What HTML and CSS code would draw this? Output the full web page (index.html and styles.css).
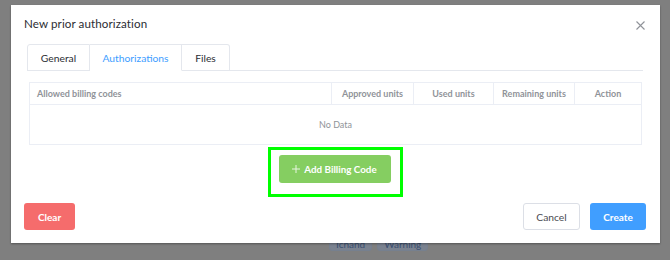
FILE: index.html
```html
<!DOCTYPE html>
<html>
<head>
	<meta charset="utf-8">
	<title>New prior authorization</title>
	<link rel="stylesheet" href="styles.css">
</head>
<body>
	<div class="dialog">
		<div class="dialog-header">
			<span class="dialog-title">New prior authorization</span>
			<button class="dialog-close" aria-label="Close">
				<svg width="9" height="9" viewBox="0 0 9 9"><path d="M0.5 0.5L8.5 8.5M8.5 0.5L0.5 8.5" stroke="#909399" stroke-width="1.1" fill="none"/></svg>
			</button>
		</div>
		<div class="dialog-body">
			<div class="tabs">
				<div class="tab">General</div>
				<div class="tab is-active">Authorizations</div>
				<div class="tab">Files</div>
			</div>
			<div class="table">
				<div class="table-head">
					<div class="cell cell-code">Allowed billing codes</div>
					<div class="cell cell-approved">Approved units</div>
					<div class="cell cell-used">Used units</div>
					<div class="cell cell-remaining">Remaining units</div>
					<div class="cell cell-action">Action</div>
				</div>
				<div class="table-empty">No Data</div>
			</div>
			<div class="add-wrap">
				<div class="highlight">
					<button class="btn btn-success">
						<svg width="8" height="8" viewBox="0 0 8 8"><path d="M4 0V8M0 4H8" stroke="#e8f5e1" stroke-width="1" fill="none"/></svg>
						Add Billing Code
					</button>
				</div>
			</div>
		</div>
		<div class="dialog-footer">
			<button class="btn btn-danger">Clear</button>
			<div class="footer-right">
				<button class="btn btn-default">Cancel</button>
				<button class="btn btn-primary">Create</button>
			</div>
		</div>
	</div>
	<div class="page-tags">
		<span class="page-tag">Ichand</span>
		<span class="page-tag">Warning</span>
	</div>
</body>
</html>
```

FILE: styles.css
```css
* {
	margin: 0;
	padding: 0;
	box-sizing: border-box;
}
body {
	font-family: 'Lato', 'Open Sans', Arial, sans-serif;
	background-color: #7f7f7f;
	padding: 5px 0 0 11px;
	overflow: hidden;
}
button {
	font-family: inherit;
	border: 0;
	background: none;
	cursor: pointer;
}
.dialog {
	position: relative;
	z-index: 1;
	width: 649px;
	height: 238px;
	background-color: #fff;
	box-shadow: 0 1px 2px rgba(0, 0, 0, 0.35);
	display: flex;
	flex-direction: column;
}
.dialog-header {
	display: flex;
	justify-content: space-between;
	align-items: center;
	height: 39px;
	padding: 0 14px 2px 13px;
}
.dialog-title {
	font-size: 11.6px;
	color: #2b2d33;
	letter-spacing: 0.1px;
}
.dialog-close {
	display: flex;
	width: 12px;
	height: 12px;
	align-items: center;
	justify-content: center;
	margin-top: 4px;
}
.dialog-body {
	padding: 0 17px 0 16px;
}
.tabs {
	display: flex;
	height: 27px;
	border-bottom: 1px solid #e4e7ed;
}
.tab {
	display: flex;
	align-items: center;
	justify-content: center;
	height: 27px;
	padding: 0 12px;
	font-size: 10.3px;
	color: #2b2d33;
	border: 1px solid #e4e7ed;
	border-left: 0;
}
.tab:first-child {
	border-left: 1px solid #e4e7ed;
	border-radius: 3px 0 0 0;
	width: 63px;
}
.tab:nth-child(2) {
	width: 92px;
}
.tab:nth-child(3) {
	width: 48px;
	border-radius: 0 3px 0 0;
}
.tab.is-active {
	color: #409eff;
	border-bottom-color: #fff;
}
.table {
	margin: 11px 1px 0 2px;
	border: 1px solid #ebeef5;
}
.table-head {
	display: flex;
	height: 22px;
	border-bottom: 1px solid #ebeef5;
}
.cell {
	display: flex;
	align-items: center;
	justify-content: center;
	font-size: 9px;
	font-weight: 700;
	color: #909399;
	border-left: 1px solid #ebeef5;
}
.cell-code {
	width: 301px;
	justify-content: flex-start;
	padding-left: 7px;
	border-left: 0;
}
.cell-approved {
	width: 82px;
}
.cell-used {
	width: 80px;
}
.cell-remaining {
	width: 81px;
}
.cell-action {
	flex: 1;
}
.table-empty {
	height: 39px;
	display: flex;
	align-items: center;
	justify-content: center;
	font-size: 9px;
	color: #909399;
}
.add-wrap {
	display: flex;
	justify-content: center;
	padding-top: 2px;
}
.highlight {
	border: 3px solid #00ff00;
	padding: 5px 9px 11px 8px;
}
.btn {
	height: 27px;
	border-radius: 3px;
	font-size: 10px;
	font-weight: 700;
	color: #fff;
	display: inline-flex;
	align-items: center;
	justify-content: center;
	gap: 4px;
}
.btn-success {
	width: 112px;
	height: 28px;
	background-color: #85ce61;
	font-size: 9.8px;
}
.dialog-footer {
	display: flex;
	justify-content: space-between;
	padding: 6px 14px 0 13px;
}
.footer-right {
	display: flex;
	gap: 10px;
}
.btn-danger {
	width: 51px;
	background-color: #f56c6c;
}
.btn-default {
	width: 57px;
	font-size: 10.3px;
	font-weight: 400;
	color: #4a4c52;
	border: 1px solid #dcdfe6;
	background-color: #fff;
}
.btn-primary {
	width: 56px;
	background-color: #409eff;
}
.page-tags {
	display: flex;
	gap: 5px;
	margin: -6px 0 0 318px;
}
.page-tag {
	height: 14px;
	padding: 0 6px;
	font-size: 10px;
	line-height: 12px;
	color: #3a4f70;
	background-color: #7a8290;
	border: 1px solid #76808f;
	border-radius: 3px;
}
```
